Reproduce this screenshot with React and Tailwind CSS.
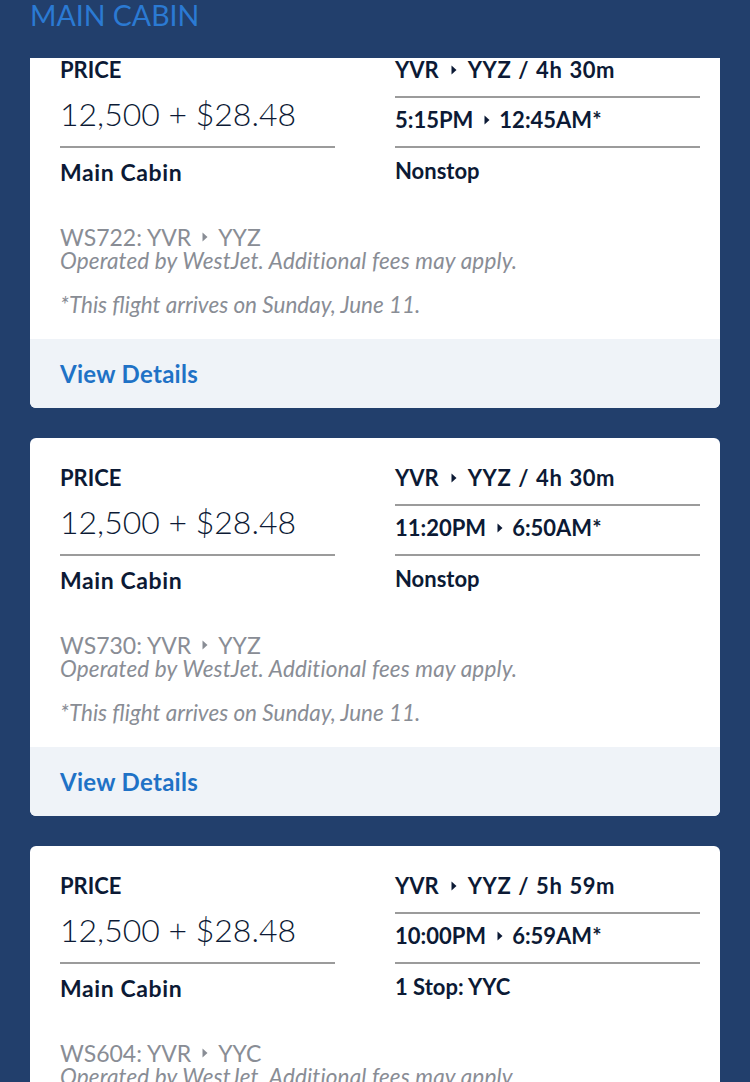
import React from "react";

const Tri = ({ className = "" }) => (
  <svg viewBox="0 0 6 10" className={className} fill="currentColor" aria-hidden="true">
    <path d="M0.5 0.5 L5.5 5 L0.5 9.5 Z" />
  </svg>
);

const flights = [
  {
    route: "YVR",
    dest: "YYZ",
    dur: "4h 30m",
    dep: "5:15PM",
    arr: "12:45AM*",
    stops: "Nonstop",
    code: "WS722",
    seg: "YYZ",
  },
  {
    route: "YVR",
    dest: "YYZ",
    dur: "4h 30m",
    dep: "11:20PM",
    arr: "6:50AM*",
    stops: "Nonstop",
    code: "WS730",
    seg: "YYZ",
  },
  {
    route: "YVR",
    dest: "YYZ",
    dur: "5h 59m",
    dep: "10:00PM",
    arr: "6:59AM*",
    stops: "1 Stop: YYC",
    code: "WS604",
    seg: "YYC",
  },
];

function Card({ f }) {
  return (
    <div className="rounded-[6px] bg-white overflow-hidden shrink-0">
      <div className="pl-[30px] pr-[20px] pt-[27px] pb-[22px]">
        <div className="flex justify-between">
          <div className="w-[275px]">
            <div className="text-[22px] leading-[26px] font-bold text-[#0c1a35]">PRICE</div>
            <div className="mt-[11px] pb-[12px] text-[32px] leading-[40px] font-light text-[#0c1a35] border-b-2 border-[#9b9b9b]">
              12,500 + $28.48
            </div>
            <div className="mt-[11px] text-[23px] leading-[26px] tracking-[0.6px] font-bold text-[#0c1a35]">
              Main Cabin
            </div>
          </div>
          <div className="w-[305px] text-[22px] leading-[26px] font-bold text-[#0c1a35]">
            <div className="flex items-center pb-[13px] border-b-2 border-[#9b9b9b]">
              <span>{f.route}</span>
              <Tri className="w-[6px] h-[10px] ml-[12px] mr-[11px]" />
              <span className="[word-spacing:1px] tracking-[0.6px]">
                {f.dest} / {f.dur}
              </span>
            </div>
            <div className="flex items-center mt-[9px] pb-[13px] border-b-2 border-[#9b9b9b]">
              <span>{f.dep}</span>
              <Tri className="w-[6px] h-[10px] ml-[11px] mr-[9px]" />
              <span>{f.arr}</span>
            </div>
            <div className="mt-[10px]">{f.stops}</div>
          </div>
        </div>
        <div className="mt-[40px] leading-[24px] text-[#898d95]">
          <div className="flex items-center text-[23px]">
            <span>{f.code}: YVR</span>
            <Tri className="w-[6px] h-[10px] ml-[11px] mr-[10px]" />
            <span>{f.seg}</span>
          </div>
          <div className="italic text-[22.5px] tracking-[0.15px]">
            Operated by WestJet. Additional fees may apply.
          </div>
          <div className="italic text-[22.5px] mt-[20px]">*This flight arrives on Sunday, June 11.</div>
        </div>
      </div>
      <div className="h-[69px] bg-[#eff3f8] pl-[30px] flex items-center">
        <span className="text-[24px] tracking-[0.3px] font-bold text-[#1f72c6]">View Details</span>
      </div>
    </div>
  );
}

export default function App() {
  return (
    <div
      className="w-[750px] h-[1082px] overflow-hidden bg-[#223f6c] flex flex-col"
      style={{ fontFamily: "Lato, 'Open Sans', sans-serif" }}
    >
      <div className="h-[58px] shrink-0 px-[30px]">
        <div className="text-[28.5px] leading-[32px] -mt-[1px] text-[#2b7ad3]">MAIN CABIN</div>
      </div>
      <div className="flex-1 overflow-hidden">
        <div className="mt-[-28px] px-[30px] flex flex-col gap-[30px]">
          {flights.map((f, i) => (
            <Card key={i} f={f} />
          ))}
        </div>
      </div>
    </div>
  );
}
